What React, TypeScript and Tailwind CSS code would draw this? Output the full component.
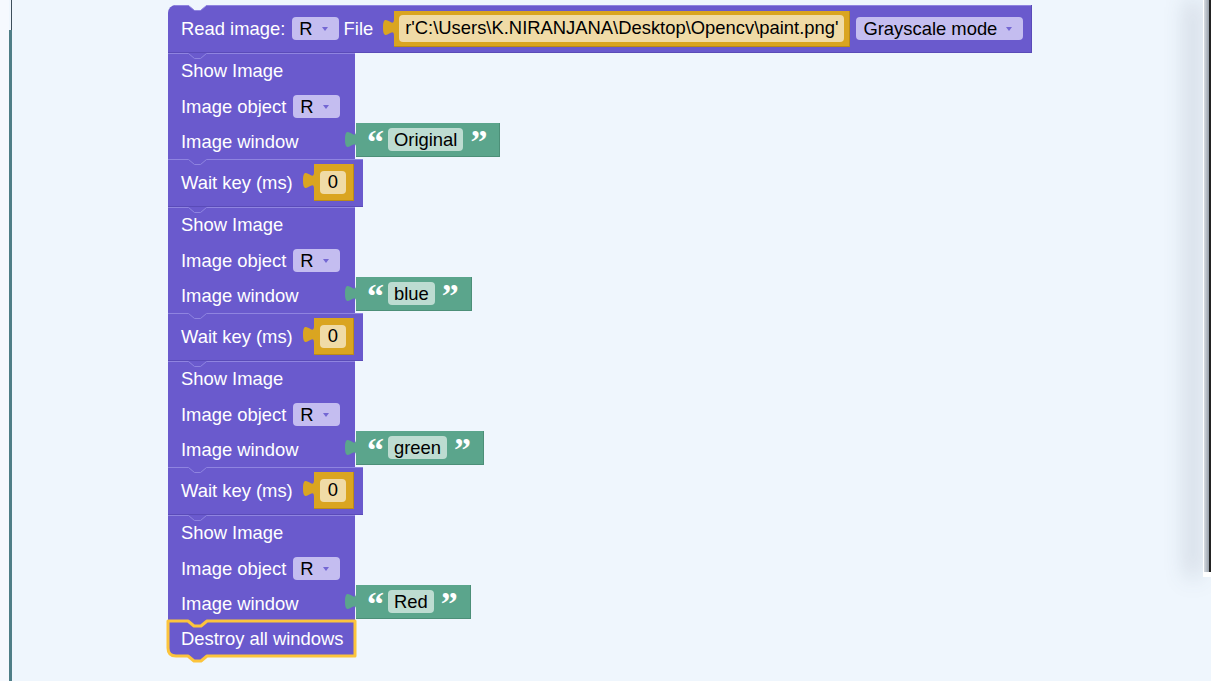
import type { ReactNode } from 'react'

const PURPLE = '#6a5acd'
const GOLD = '#daa520'
const GREEN = '#5ba58c'
const CANVAS = '#eff6fd'

function Tab({ fill }: { fill: string }) {
  return (
    <svg width="11" height="17" className="mt-[8px] shrink-0 overflow-visible">
      <path d="M11 0 C11 11.3 0 -9 0 8.5 S11 5.7 11 17 Z" fill={fill} />
    </svg>
  )
}

// light top edge with the notch where the block above plugs in
function TopEdge({ first, w = 'w-full' }: { first?: boolean; w?: string }) {
  return (
    <svg className={`pointer-events-none absolute left-0 top-0 h-[7px] ${w}`}>
      {first && <path d="M20 0 L26 5 H33 L39 0 Z" fill={CANVAS} />}
      <path
        d={`M${first ? 7 : 0} 0.5 H20.5 L26.5 5.5 H32.5 L38.5 0.5 H2000`}
        stroke="#8f84e0"
        fill="none"
      />
    </svg>
  )
}

function Dropdown({ label }: { label: string }) {
  return (
    <div className="flex h-[23px] shrink-0 items-center rounded-[4px] bg-[#c4bdf0] pl-[7px] pr-[11px] text-black">
      <span>{label}</span>
      <svg width="6" height="4" className="ml-[9px]">
        <path d="M0 0 H6 L3 4 Z" fill="#7467d3" />
      </svg>
    </div>
  )
}

function TextBlock({ value }: { value: string }) {
  return (
    <div className="-ml-[10px] -mt-px flex items-start">
      <Tab fill={GREEN} />
      <div className="flex h-[34px] items-center border-b border-r border-[#4c8f78] bg-[#5ba58c] pl-[11px] pr-[12px]">
        <span className="self-start pt-[4px] font-['Liberation_Serif',serif] text-[34px] font-bold leading-[30px] text-white">“</span>
        <div className="ml-[4px] flex h-[23px] items-center rounded-[4px] bg-[#bddcd1] px-[6px] text-black">{value}</div>
        <span className="ml-[7px] self-start pt-[4px] font-['Liberation_Serif',serif] text-[34px] font-bold leading-[30px] text-white">”</span>
      </div>
    </div>
  )
}

function Row({ children, h = 'h-[35px]' }: { children: ReactNode; h?: string }) {
  return <div className={`flex w-[187px] items-center gap-[7px] bg-[#6a5acd] pl-[13px] ${h}`}>{children}</div>
}

function ShowImage({ win }: { win: string }) {
  return (
    <div className="relative">
      <Row h="h-[36px]">Show Image</Row>
      <Row>
        Image object <Dropdown label="R" />
      </Row>
      <div className="flex h-[35px]">
        <Row>Image window</Row>
        <TextBlock value={win} />
      </div>
      <TopEdge w="w-[187px]" />
    </div>
  )
}

function WaitKey() {
  return (
    <div className="relative flex h-[48px] w-[195px] items-center border-b border-[#5a4bb8] bg-[#6a5acd] pl-[13px]">
      <span>Wait key (ms)</span>
      <div className="ml-[10px] flex items-start">
        <Tab fill={GOLD} />
        <div className="flex h-[37px] items-center border-b border-r border-[#bb8b18] bg-[#daa520] pl-[6px] pr-[7px]">
          <div className="flex h-[23px] items-center rounded-[4px] bg-[#f0dba6] px-[8px] text-black">0</div>
        </div>
      </div>
      <TopEdge />
    </div>
  )
}

function ReadImage() {
  return (
    <div className="relative flex h-[48px] items-center rounded-tl-[8px] border-b border-r border-[#5a4bb8] bg-[#6a5acd] pl-[13px] pr-[8px]">
      <span>Read image:</span>
      <div className="ml-[7px]">
        <Dropdown label="R" />
      </div>
      <span className="ml-[5px]">File</span>
      <div className="ml-[10px] flex items-start">
        <Tab fill={GOLD} />
        <div className="flex h-[36px] items-center border-b border-r border-[#bb8b18] bg-[#daa520] px-[5px]">
          <div className="flex h-[27px] items-center rounded-[4px] bg-[#f0dba6] px-[6px] text-black">
            r'C:\Users\K.NIRANJANA\Desktop\Opencv\paint.png'
          </div>
        </div>
      </div>
      <div className="ml-[6px]">
        <Dropdown label="Grayscale mode" />
      </div>
      <TopEdge first />
    </div>
  )
}

function DestroyAll() {
  return (
    <div className="relative flex h-[35px] w-[187px] items-center rounded-bl-[8px] bg-[#6a5acd] pl-[13px]">
      <svg className="pointer-events-none absolute left-0 top-0 overflow-visible" width="187" height="35">
        <path
          d="M0 0 H20 L26 5 H33 L39 0 H187 V35 H39 L33 40 H26 L20 35 H8 Q0 35 0 27 Z"
          fill={PURPLE}
          stroke="#fcc43c"
          strokeWidth="3"
          strokeLinejoin="round"
        />
      </svg>
      <span className="relative">Destroy all windows</span>
    </div>
  )
}

export default function App() {
  return (
    <div className="relative flex h-[681px] w-[1211px] overflow-hidden bg-[#eff6fd] font-['Liberation_Sans',Arial,sans-serif]">
      <div className="w-[9px] bg-[#f6f9fe]" />
      <div className="flex w-[3px] flex-col">
        <div className="h-[30px] border-r border-[#3d4f5c]" />
        <div className="flex-1 bg-[#4f7e87]" />
      </div>

      {/* block stack */}
      <div className="flex flex-col items-start pl-[156px] pt-[5px] text-[18.4px] text-white">
        <ReadImage />
        <ShowImage win="Original" />
        <WaitKey />
        <ShowImage win="blue" />
        <WaitKey />
        <ShowImage win="green" />
        <WaitKey />
        <ShowImage win="Red" />
        <DestroyAll />
      </div>

      {/* side panel edge */}
      <div className="absolute left-[1203px] top-0 flex h-[577px] w-[8px] border-l border-white bg-white pb-[5px] shadow-[-14px_0_22px_rgba(70,85,105,0.35)]">
        <div className="w-[5px] bg-gradient-to-r from-[#d6dbe1] to-[#9aa2ac]" />
        <div className="flex-1 bg-[#232323]" />
      </div>
    </div>
  )
}
